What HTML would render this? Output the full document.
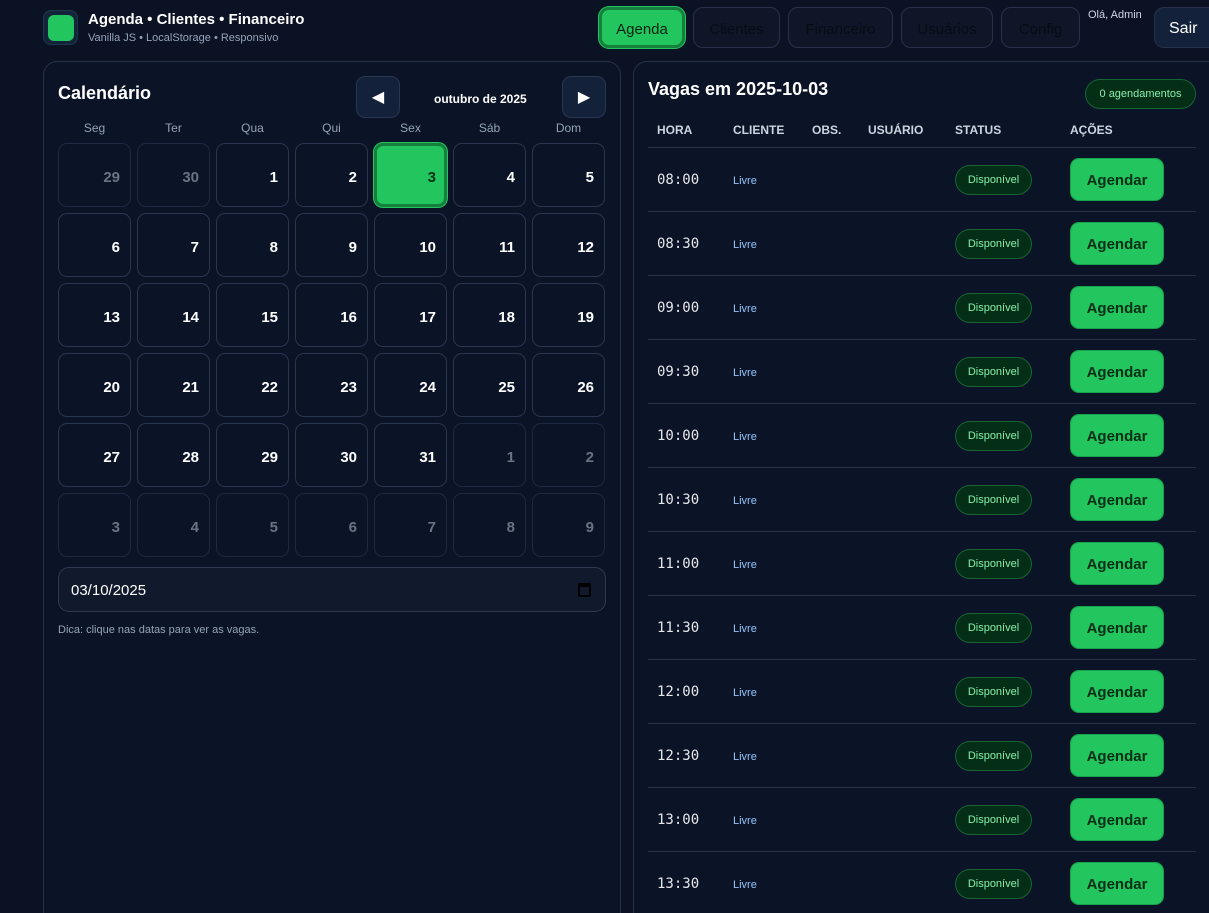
<!DOCTYPE html>
<html style="height:913px;overflow:hidden"><head><meta charset="utf-8"><style>
*{box-sizing:border-box;margin:0;padding:0}
body{width:1209px;height:913px;overflow:hidden;background:#0b1224;font-family:"Liberation Sans",sans-serif;color:#e5e7eb;position:relative}
.abs{position:absolute}
.logo{left:43px;top:10px;width:35px;height:35px;border-radius:8px;background:#13233a;border:1px solid #1e3a4a}
.logo i{position:absolute;left:4px;top:4px;width:26px;height:26px;border-radius:6px;background:#22c55e}
.t1{left:88px;top:11px;font-weight:bold;font-size:15px;color:#fff}
.t2{left:88px;top:32px;font-size:11px;color:#94a3b8}
.nb{top:7px;height:41px;border:1px solid #27324a;border-radius:10px;background:#0e1628;color:#070b14;font-size:15px;display:flex;align-items:center;justify-content:center;padding-top:3px}
.nb.act{background:#22c55e;border:3px solid #15803d;box-shadow:0 0 0 1px #22c55e;color:#06210f}
.panel{border:1px solid #27324a;border-bottom:none;border-radius:14px 14px 0 0;background:#0b1326}
.cell{position:absolute;width:73px;height:64px;border:1px solid #2a3550;border-radius:9px;font-weight:bold;font-size:15px;color:#fff;text-align:right;padding:25px 10px 0 0}
.cell.o{color:#6b7280;border-color:#1e2840}
.cell.sel{background:#22c55e;border:3px solid #15803d;color:#052e16;padding:23px 8px 0 0;box-shadow:0 0 0 1px #22c55e}
.dw{position:absolute;top:121px;width:73px;text-align:center;font-size:12px;color:#94a3b8}
.arr{top:76px;width:44px;height:42px;border:1px solid #2a3550;border-radius:9px;background:#13213b;color:#fff;font-size:16px;display:flex;align-items:center;justify-content:center}
.th{position:absolute;top:123px;font-size:12px;font-weight:bold;color:#cbd5e1}
.row{position:absolute;left:648px;width:548px;height:64px;border-top:1px solid #27324a}
.row .h{position:absolute;left:9px;top:24px;font-family:"DejaVu Sans Mono","Liberation Mono",monospace;font-size:14px;color:#e5e7eb}
.row .l{position:absolute;left:85px;top:27px;font-size:11px;color:#93c5fd}
.row .d{position:absolute;left:307px;top:17px;width:77px;height:30px;border:1px solid #166534;border-radius:15px;background:#052e16;color:#86efac;font-size:11px;display:flex;align-items:center;justify-content:center}
.row .a{position:absolute;left:422px;top:10px;width:94px;height:43px;border-radius:9px;background:#22c55e;border:1px solid #16a34a;color:#052e16;font-weight:bold;font-size:15px;display:flex;align-items:center;justify-content:center;padding-top:2px}
</style></head><body>
<div class="abs logo"><i></i></div>
<div class="abs t1">Agenda • Clientes • Financeiro</div>
<div class="abs t2">Vanilla JS • LocalStorage • Responsivo</div>
<div class="abs nb act" style="left:599px;width:86px">Agenda</div>
<div class="abs nb" style="left:693px;width:87px">Clientes</div>
<div class="abs nb" style="left:788px;width:105px">Financeiro</div>
<div class="abs nb" style="left:901px;width:92px">Usuários</div>
<div class="abs nb" style="left:1001px;width:79px">Config</div>
<div class="abs" style="left:1088px;top:9px;font-size:11px;color:#cbd5e1">Olá, Admin</div>
<div class="abs nb" style="left:1154px;width:55px;border-radius:10px 0 0 10px;border-right:none;background:#13213b;color:#fff;font-size:16px;justify-content:flex-start;padding-left:14px">Sair</div>

<div class="abs panel" style="left:43px;top:61px;width:578px;height:852px"></div>
<div class="abs" style="left:58px;top:83px;font-size:18px;font-weight:bold;color:#fff">Calendário</div>
<div class="abs arr" style="left:356px">◀</div>
<div class="abs" style="left:434px;top:92px;font-size:12px;font-weight:bold;color:#fff">outubro de 2025</div>
<div class="abs arr" style="left:562px">▶</div>
<div class="dw" style="left:58px">Seg</div><div class="dw" style="left:137px">Ter</div><div class="dw" style="left:216px">Qua</div><div class="dw" style="left:295px">Qui</div><div class="dw" style="left:374px">Sex</div><div class="dw" style="left:453px">Sáb</div><div class="dw" style="left:532px">Dom</div>
<div id="cal"></div>
<div class="abs" style="left:58px;top:567px;width:548px;height:45px;border:1px solid #2f3a52;border-radius:11px;background:#111a2c;font-size:15px;color:#fff;padding:14px 0 0 12px">03/10/2025
<span style="position:absolute;right:14px;top:15px;width:13px;height:14px;border:2px solid #000;border-top-width:4px;border-radius:2px"></span></div>
<div class="abs" style="left:58px;top:624px;font-size:11px;color:#94a3b8">Dica: clique nas datas para ver as vagas.</div>

<div class="abs panel" style="left:633px;top:61px;width:576px;height:852px;border-right:none;border-radius:14px 0 0 0"></div>
<div class="abs" style="left:648px;top:79px;font-size:18px;font-weight:bold;color:#fff">Vagas em 2025-10-03</div>
<div class="abs" style="left:1085px;top:79px;width:111px;height:30px;border:1px solid #166534;border-radius:15px;background:#052e16;color:#86efac;font-size:11px;display:flex;align-items:center;justify-content:center">0 agendamentos</div>
<div class="th" style="left:657px">HORA</div><div class="th" style="left:733px">CLIENTE</div><div class="th" style="left:812px">OBS.</div><div class="th" style="left:868px">USUÁRIO</div><div class="th" style="left:955px">STATUS</div><div class="th" style="left:1070px">AÇÕES</div>
<div id="rows"></div>
<script>
var c='',days=[[29,1],[30,1]];for(var i=1;i<=31;i++)days.push([i,0]);for(i=1;i<=9;i++)days.push([i,1]);
days.forEach(function(d,k){var x=58+(k%7)*79,y=143+Math.floor(k/7)*70;var cl='cell'+(d[1]?' o':'')+(k==4?' sel':'');c+='<div class="'+cl+'" style="left:'+x+'px;top:'+y+'px">'+d[0]+'</div>';});
document.getElementById('cal').innerHTML=c;
var t=['08:00','08:30','09:00','09:30','10:00','10:30','11:00','11:30','12:00','12:30','13:00','13:30'],r='';
t.forEach(function(h,k){var hh=(k==11)?'height:54px;':'';r+='<div class="row" style="'+hh+'top:'+(147+k*64)+'px"><span class="h">'+h+'</span><span class="l">Livre</span><span class="d">Disponível</span><span class="a">Agendar</span></div>';});
document.getElementById('rows').innerHTML=r;
</script>
</body></html>
